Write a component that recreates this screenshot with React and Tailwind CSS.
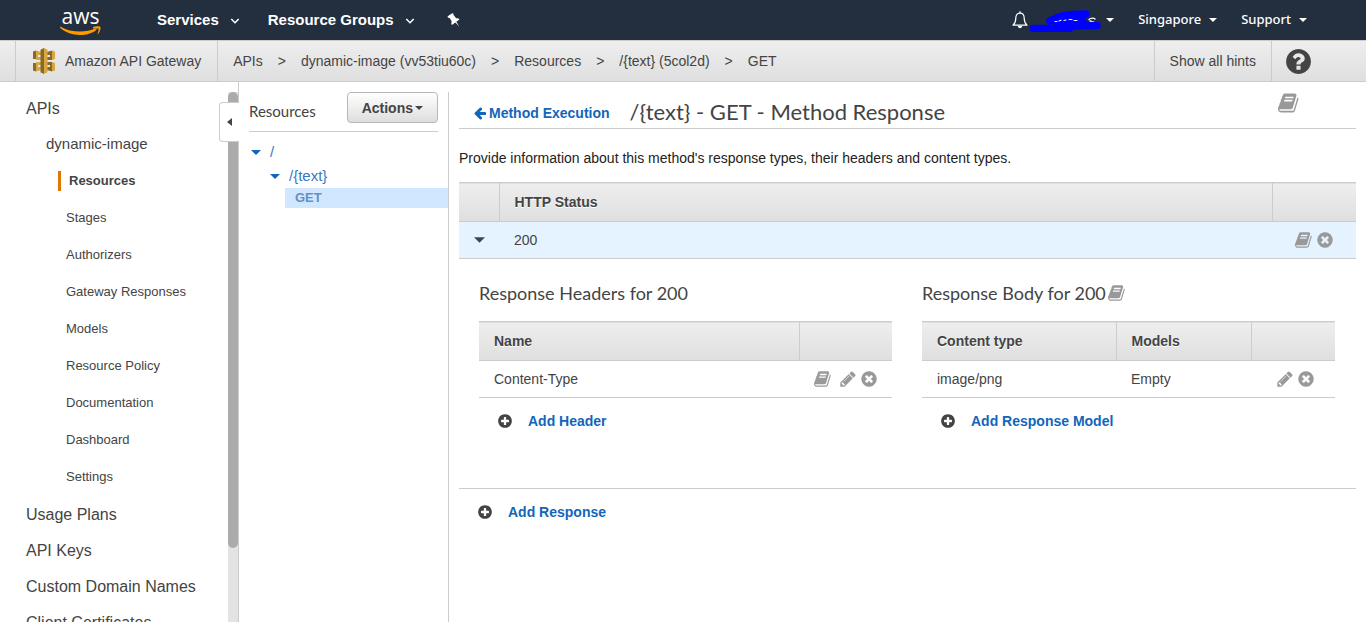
import React from "react";

const DISC =
  "m320-64q0 209-103 385.5t-279.5 279.5-385.5 103-385.5-103-279.5-279.5-103-385.5 103-385.5 279.5-279.5 385.5-103 385.5 103 279.5 279.5 103 385.5z";

const PATHS = {
  book: "M1639 478q40 57 18 129l-275 906q-19 64-76.5 107.5t-122.5 43.5h-923q-77 0-148.5-53.5t-99.5-131.5q-24-67-2-127 0-4 3-27t4-37q1-8-3-21.5t-3-19.5q2-11 8-21t16.5-23.5 16.5-23.5q23-38 45-91.5t30-91.5q3-10 .5-30t-.5-28q3-11 17-28t17-23q21-36 42-92t25-90q1-9-2.5-32t.5-28q4-13 22-30.5t22-22.5q19-26 42.5-84.5t27.5-96.5q1-8-3-25.5t-2-26.5q2-8 9-18t18-23 17-21q8-12 16.5-30.5t15-35 16-36 19.5-32 26.5-23.5 36-11.5 47.5 5.5l-1 3q38-9 51-9h761q74 0 114 56t18 130l-274 906q-36 119-71.5 153.5t-128.5 34.5h-869q-27 0-38 15-11 16-1 43 24 70 144 70h923q29 0 56-15.5t35-41.5l300-987q7-22 5-57 38 15 59 43zm-1064 2q-4 13 2 22.5t20 9.5h608q13 0 25.5-9.5t16.5-22.5l21-64q4-13-2-22.5t-20-9.5h-608q-13 0-25.5 9.5t-16.5 22.5zm-83 256q-4 13 2 22.5t20 9.5h608q13 0 25.5-9.5t16.5-22.5l21-64q4-13-2-22.5t-20-9.5h-608q-13 0-25.5 9.5t-16.5 22.5z",
  pencil:
    "M491 1536l91-91-235-235-91 91v107h128v128h107zm523-928q0-22-22-22-10 0-17 7l-542 542q-7 7-7 17 0 22 22 22 10 0 17-7l542-542q7-7 7-17zm-54-192l416 416-832 832h-416v-416zm683 96q0 53-37 90l-166 166-416-416 166-165q36-38 90-38 53 0 91 38l235 234q37 39 37 91z",
  remove:
    "M1277 1122q0-26-19-45l-181-181 181-181q19-19 19-45 0-27-19-46l-90-90q-19-19-46-19-26 0-45 19l-181 181-181-181q-19-19-45-19-27 0-46 19l-90 90q-19 19-19 46 0 26 19 45l181 181-181 181q-19 19-19 45 0 27 19 46l90 90q19 19 46 19 26 0 45-19l181-181 181 181q19 19 45 19 27 0 46-19l90-90q19-19 19-46zm387-226q0 209-103 385.5t-279.5 279.5-385.5 103-385.5-103-279.5-279.5-103-385.5 103-385.5 279.5-279.5 385.5-103 385.5 103 279.5 279.5 103 385.5z",
  plus:
    "M1344 960v-128q0-26-19-45t-45-19h-256v-256q0-26-19-45t-45-19h-128q-26 0-45 19t-19 45v256h-256q-26 0-45 19t-19 45v128q0 26 19 45t45 19h256v256q0 26 19 45t45 19h128q26 0 45-19t19-45v-256h256q26 0 45-19t19-45z" +
    DISC,
  question:
    "M1024 1376v-192q0-14-9-23t-23-9h-192q-14 0-23 9t-9 23v192q0 14 9 23t23 9h192q14 0 23-9t9-23zm256-672q0-88-55.5-163t-138.5-116-170-41q-243 0-371 213-15 24 8 42l132 100q7 6 19 6 16 0 25-12 53-68 86-92 34-24 86-24 48 0 85.500 26t37.500 59q0 38-20 61t-68 45q-63 28-115.500 86.500t-52.500 125.500v36q0 14 9 23t23 9h192q14 0 23-9t9-23q0-19 21.500-49.500t54.500-49.500q32-18 49-28.500t46-35 44.500-48 28-60.500 12.500-81zm384 192q0 209-103 385.500t-279.500 279.500-385.500 103-385.500-103-279.500-279.500-103-385.500 103-385.500 279.500-279.500 385.500-103 385.500 103 279.500 279.500 103 385.500z",
  left: "M1664 896v128q0 53-32.5 90.5t-84.5 37.5h-704l293 294q38 36 38 90t-38 90l-75 76q-37 37-90 37-52 0-91-37l-651-652q-37-37-37-90 0-52 37-91l651-650q38-38 91-38 52 0 90 38l75 74q38 38 38 91t-38 91l-293 293h704q52 0 84.5 37.5t32.5 90.5z",
};

function Icon({ name, className }) {
  return (
    <svg viewBox="0 0 1792 1792" fill="currentColor" aria-hidden="true" className={`shrink-0 ${className}`}>
      <path d={PATHS[name]} />
    </svg>
  );
}

function Triangle({ className }) {
  return (
    <svg viewBox="0 0 10 5" fill="currentColor" aria-hidden="true" className={`shrink-0 ${className}`}>
      <path d="M0 0h10L5 5z" />
    </svg>
  );
}

function Chevron() {
  return (
    <svg viewBox="0 0 10 6" fill="none" stroke="currentColor" strokeWidth="1.6" aria-hidden="true" className="mt-0.5 h-1.5 w-2.5">
      <path d="M1.300 1 5 4.700 8.700 1" />
    </svg>
  );
}

function AwsLogo() {
  return (
    <a href="#home" aria-label="AWS" className="flex w-[41px] flex-col items-center text-white">
      <span className="font-['Open_Sans','Noto_Sans',sans-serif] text-[21px] leading-6 font-medium">aws</span>
      <svg viewBox="0 0 41 10" fill="none" aria-hidden="true" className="-mt-0.5 h-2.5 w-full">
        <path d="M0 1.2C.3.7.7.7 1.2 1 10 6.300 25 7.200 35.500 2.600c1-.4 1.600.6.8 1.300C28 10.800 10.500 11.300.3 2.100 0 1.800-.1 1.500 0 1.200Z" fill="#f90" />
        <path d="M33 .8C35 -.3 39.600-.4 40.300.4c.7.8-.2 5.400-2.300 7.200-.4.300-.7.100-.5-.3.5-1.300 1.500-4.100 1-4.800-.5-.6-3.500-.3-4.900-.1-.4 0-.5-.4-.6-.6Z" transform="translate(0 .3)" fill="#f90" />
      </svg>
    </a>
  );
}

function GatewayIcon() {
  return (
    <svg viewBox="0 0 24 26" aria-hidden="true" className="h-[26px] w-6">
      <path d="M1 3.500 4 2.500V11H1zM1 15h3v8.500L1 22.500z" fill="#876929" />
      <path d="M4 2.500 9 4v3H6v2h3v3H4zM4 14h5v3H6v2h3v3l-5 1.500z" fill="#d9a741" />
      <path d="M15 4l5-1.500V12h-5V9h3V7h-3zM15 14h5v9.500L15 22v-3h3v-2h-3z" fill="#876929" />
      <path d="M20 2.500l3 1V11l-3 1zM20 14l3 1v7.500l-3 1z" fill="#d9a741" />
      <path d="M12 0v26l-3.500-1.700V1.700z" fill="#876929" />
      <path d="M12 0l3.500 1.700v22.600L12 26z" fill="#d9a741" />
    </svg>
  );
}

function NavButton({ children }) {
  return (
    <button type="button" className="flex items-center gap-[11px] text-[15px] font-bold">
      {children}
      <Chevron />
    </button>
  );
}

function AccountButton({ children }) {
  return (
    <button
      type="button"
      className="flex items-center gap-2 font-['Noto_Sans','Open_Sans',sans-serif] text-[13px] font-medium"
    >
      {children}
      <Triangle className="h-1 w-2" />
    </button>
  );
}

function TopBar() {
  return (
    <header className="flex h-10 shrink-0 items-center justify-between bg-[#232f3e] pr-[59px] pl-15 text-white">
      <nav className="flex items-center">
        <AwsLogo />
        <div className="ml-14 flex items-center gap-7">
          <NavButton>Services</NavButton>
          <NavButton>Resource Groups</NavButton>
          <button type="button" aria-label="Pin shortcuts" className="ml-1">
            <svg viewBox="0 0 13 14" fill="currentColor" className="h-3.5 w-[13px]" aria-hidden="true">
              <path d="M4.800.5C6 0 7 .9 6.500 2l2.700 3.300c1.300-.3 2.700.2 3.300 1.200L9.300 8.800l2.900 4.600-3.900-3.800L5 12c-.8-1-.9-2.500-.2-3.600L2.600 5C1.400 5.200.3 4.500.7 3.300z" />
            </svg>
          </button>
        </div>
      </nav>
      <div className="flex items-center">
        <button type="button" aria-label="Notifications">
          <svg viewBox="0 0 16 18" fill="none" stroke="currentColor" strokeWidth="1.200" className="h-[18px] w-4" aria-hidden="true">
            <path d="M8 2.200C4.800 2.200 3.800 4.700 3.800 7.200 3.800 11 3 12.300 1 14.200h14c-2-1.900-2.800-3.200-2.800-7 0-2.500-1-5-4.200-5Z" strokeLinejoin="round" />
            <path d="M8 .3v2" />
            <path d="M5.800 15h4.400c0 1.300-1 2.200-2.200 2.200S5.800 16.300 5.800 15Z" fill="currentColor" stroke="none" />
          </svg>
        </button>
        <button type="button" aria-label="Account" className="flex items-center">
          <svg viewBox="0 0 76 24" className="h-6 w-[76px]" fill="none" strokeLinecap="round" strokeLinejoin="round" aria-hidden="true">
            <path d="M61 11.500c2-2 5-1.500 6-.5M62 13c2 .5 5 .5 5 2.500" stroke="#fff" strokeWidth="1.300" />
            <path d="M5.500 20.500h36M22 13c8-5 16-7 36-7M30 15.500h26M38 18l31-.5" stroke="#00f" strokeWidth="7.500" />
            <path d="M22 12l20-6h15l-2 9H28z" fill="#00f" stroke="#00f" strokeWidth="3" />
            <path d="M27 13.500h2M31 13l2-.8M36 12.500l2-.5M41 11.500h3M46 12.500h3" stroke="#dfe6ff" strokeWidth="1.200" />
          </svg>
          <Triangle className="ml-0.5 h-1 w-2" />
        </button>
        <div className="ml-6 flex items-center gap-6">
          <AccountButton>Singapore</AccountButton>
          <AccountButton>Support</AccountButton>
        </div>
      </div>
    </header>
  );
}

const CRUMBS = ["APIs", "dynamic-image (vv53tiu60c)", "Resources", "/{text} (5col2d)", "GET"];

function ServiceBar() {
  return (
    <div className="flex h-[42px] shrink-0 items-stretch border-y border-[#ccc] bg-linear-to-b from-[#eee] to-[#dfdfdf] pl-[15px] text-sm">
      <a href="#gateway" className="flex items-center gap-[9px] border-x border-[#ccc] px-4">
        <GatewayIcon />
        Amazon API Gateway
      </a>
      <nav aria-label="Breadcrumb" className="flex flex-1 items-center pl-[15px]">
        <ol className="flex gap-[15px]">
          {CRUMBS.map((label, i) => (
            <li key={label} className="flex gap-[15px]">
              {i > 0 && <span aria-hidden="true">&gt;</span>}
              <a href="#crumb">{label}</a>
            </li>
          ))}
        </ol>
      </nav>
      <button type="button" className="border-x border-[#ccc] px-[15px]">
        Show all hints
      </button>
      <button type="button" aria-label="Help" className="mr-[53px] ml-3">
        <Icon name="question" className="size-[29px]" />
      </button>
    </div>
  );
}

const API_PAGES = [
  "Resources",
  "Stages",
  "Authorizers",
  "Gateway Responses",
  "Models",
  "Resource Policy",
  "Documentation",
  "Dashboard",
  "Settings",
];

function Sidebar() {
  return (
    <aside className="relative flex w-[239px] shrink-0 border-r border-[#ccc] pt-2.5">
      <nav className="-mt-px flex-1 overflow-hidden">
        <a href="#apis" className="flex h-9 items-center pl-[26px] text-base">APIs</a>
        <a href="#api" className="flex h-[35px] items-center pl-[46px] text-[15px]">dynamic-image</a>
        <ul className="pb-px text-[13px]">
          {API_PAGES.map((page, i) => (
            <li key={page} className="flex h-[37px] items-center">
              <a
                href="#page"
                className={
                  i === 0
                    ? "ml-[58px] border-l-3 border-[#e07700] pl-2 leading-5 font-bold"
                    : "ml-[66px]"
                }
              >
                {page}
              </a>
            </li>
          ))}
        </ul>
        {["Usage Plans", "API Keys", "Custom Domain Names", "Client Certificates"].map((label) => (
          <a key={label} href="#section" className="flex h-9 items-center pt-px pl-[26px] text-base">
            {label}
          </a>
        ))}
      </nav>
      <div className="w-2.5 bg-[#e3e3e3]">
        <div className="h-[86%] rounded-full bg-[#ababab]" />
      </div>
      <button
        type="button"
        aria-label="Collapse navigation"
        className="absolute top-5 -right-px flex h-10 w-5 items-center rounded-l border border-r-0 border-[#ccc] bg-white pl-[7px]"
      >
        <svg viewBox="0 0 5 8" fill="currentColor" aria-hidden="true" className="h-2 w-[5px]">
          <path d="M5 0v8L0 4z" />
        </svg>
      </button>
    </aside>
  );
}

function ResourceTree() {
  return (
    <section className="w-[210px] shrink-0 pt-2.5">
      <div className="h-full border-r border-[#ccc]">
        <div className="mx-2.5 flex h-10 items-start justify-between border-b border-[#ccc]">
          <h2 className="font-[Lato,sans-serif] text-[15px] leading-[38px]">Resources</h2>
          <button
            type="button"
            className="flex h-[31px] items-center gap-0.5 rounded border border-[#b8b8b8] bg-linear-to-b from-white to-[#dedede] px-3.5 text-sm font-bold"
          >
            Actions
            <Triangle className="h-1 w-2" />
          </button>
        </div>
        <ul className="pt-2 text-[15px] text-[#3b78c3]">
          <li>
            <a href="#root-resource" className="flex h-6 items-center gap-[9px] pl-3">
              <Triangle className="h-[5px] w-2.5 text-[#16b]" />/
            </a>
            <ul>
              <li>
                <a href="#text-resource" className="flex h-6 items-center gap-[9px] pl-[31px]">
                  <Triangle className="h-[5px] w-2.5 text-[#16b]" />
                  {"/{text}"}
                </a>
                <a
                  href="#get"
                  className="ml-[46px] flex h-5 items-center bg-[#d1e7ff] pl-2.5 text-[13px] font-bold text-[#6391c2]"
                >
                  GET
                </a>
              </li>
            </ul>
          </li>
        </ul>
      </div>
    </section>
  );
}

function ActionIcon({ name, label, className = "size-[18px]" }) {
  return (
    <button type="button" aria-label={label} className="text-[#999]">
      <Icon name={name} className={className} />
    </button>
  );
}

function AddButton({ children }) {
  return (
    <button type="button" className="flex items-center gap-[15px] text-sm font-bold text-[#16b]">
      <Icon name="plus" className="size-4 text-[#444]" />
      {children}
    </button>
  );
}

const HEAD_ROW = "h-[39px] border-y border-[#ccc] bg-linear-to-b from-[#eee] to-[#dfdfdf] text-left [text-shadow:0_1px_0_#fff]";
const DIVIDED = "border-r border-[#ccc] px-[15px] pb-px";

function HeadersPanel() {
  return (
    <section>
      <h3 className="flex h-[27px] items-start font-[Lato,sans-serif] text-lg leading-7">Response Headers for 200</h3>
      <table className="mt-[15px] w-full table-fixed border-collapse">
        <thead>
          <tr className={HEAD_ROW}>
            <th className={DIVIDED}>Name</th>
            <th className="w-[93px]" aria-label="Actions" />
          </tr>
        </thead>
        <tbody>
          <tr className="h-[37px] border-b border-[#ccc]">
            <td className="px-[15px]">Content-Type</td>
            <td className="pr-3.5">
              <div className="flex items-center justify-end gap-[3px]">
                <ActionIcon name="book" label="Edit documentation" />
                <span className="w-px" />
                <ActionIcon name="pencil" label="Edit" />
                <ActionIcon name="remove" label="Remove" />
              </div>
            </td>
          </tr>
        </tbody>
      </table>
      <div className="pt-[13px] pl-[18px]">
        <AddButton>Add Header</AddButton>
      </div>
    </section>
  );
}

function BodyPanel() {
  return (
    <section>
      <h3 className="flex h-[27px] items-center gap-0.5 font-[Lato,sans-serif] text-lg leading-7">
        Response Body for 200
        <ActionIcon name="book" label="Edit documentation" />
      </h3>
      <table className="mt-[15px] w-full table-fixed border-collapse">
        <thead>
          <tr className={HEAD_ROW}>
            <th className={DIVIDED}>Content type</th>
            <th className={`w-[135px] ${DIVIDED}`}>Models</th>
            <th className="w-[84px]" aria-label="Actions" />
          </tr>
        </thead>
        <tbody>
          <tr className="h-[37px] border-b border-[#ccc]">
            <td className="px-[15px]">image/png</td>
            <td className="px-[15px]">Empty</td>
            <td className="pr-5">
              <div className="flex items-center justify-end gap-[3px]">
                <ActionIcon name="pencil" label="Edit" />
                <ActionIcon name="remove" label="Remove" />
              </div>
            </td>
          </tr>
        </tbody>
      </table>
      <div className="pt-[13px] pl-[18px]">
        <AddButton>Add Response Model</AddButton>
      </div>
    </section>
  );
}

function MethodResponse() {
  return (
    <main className="min-w-0 flex-1 px-2.5 pt-2.5 text-sm">
      <div className="flex h-[37px] items-center border-b border-[#ccc] pr-14 pl-3.5">
        <a href="#method" className="mt-1.5 flex items-center gap-0.5 font-bold text-[#16b]">
          <Icon name="left" className="size-[14px]" />
          Method Execution
        </a>
        <h1 className="mt-1 ml-5 flex-1 font-[Lato,sans-serif] text-[22px] leading-7">{"/{text} - GET - Method Response"}</h1>
        <button type="button" aria-label="Edit documentation" className="mb-3.5 text-[#999]">
          <Icon name="book" className="size-[22px]" />
        </button>
      </div>
      <p className="mt-[19px] mb-3.5 leading-5 text-[#222]">
        Provide information about this method's response types, their headers and content types.
      </p>
      <table className="w-full table-fixed border-collapse">
        <thead>
          <tr className={HEAD_ROW}>
            <th className="w-10 border-r border-[#ccc]" aria-label="Expand" />
            <th className={DIVIDED}>HTTP Status</th>
            <th className="w-[84px]" aria-label="Actions" />
          </tr>
        </thead>
        <tbody>
          <tr className="h-[37px] border-b border-[#ccc] bg-[#e5f2ff]">
            <td className="pl-[15px]">
              <button type="button" aria-label="Collapse 200" className="flex">
                <Triangle className="h-1.5 w-[11px]" />
              </button>
            </td>
            <td className="px-[15px]">200</td>
            <td className="pr-[22px]">
              <div className="flex items-center justify-end gap-[3px]">
                <ActionIcon name="book" label="Edit documentation" />
                <ActionIcon name="remove" label="Remove" />
              </div>
            </td>
          </tr>
          <tr className="border-b border-[#ccc]">
            <td colSpan={3} className="pt-5 pr-[21px] pb-[57px] pl-5">
              <div className="grid grid-cols-2 gap-[30px]">
                <HeadersPanel />
                <BodyPanel />
              </div>
            </td>
          </tr>
        </tbody>
      </table>
      <div className="pt-[13px] pl-[18px]">
        <AddButton>Add Response</AddButton>
      </div>
    </main>
  );
}

export default function App() {
  return (
    <div className="flex h-screen flex-col overflow-hidden bg-white font-['Liberation_Sans',Arial,sans-serif] text-[#444]">
      <TopBar />
      <ServiceBar />
      <div className="flex min-h-0 flex-1">
        <Sidebar />
        <ResourceTree />
        <MethodResponse />
      </div>
    </div>
  );
}
